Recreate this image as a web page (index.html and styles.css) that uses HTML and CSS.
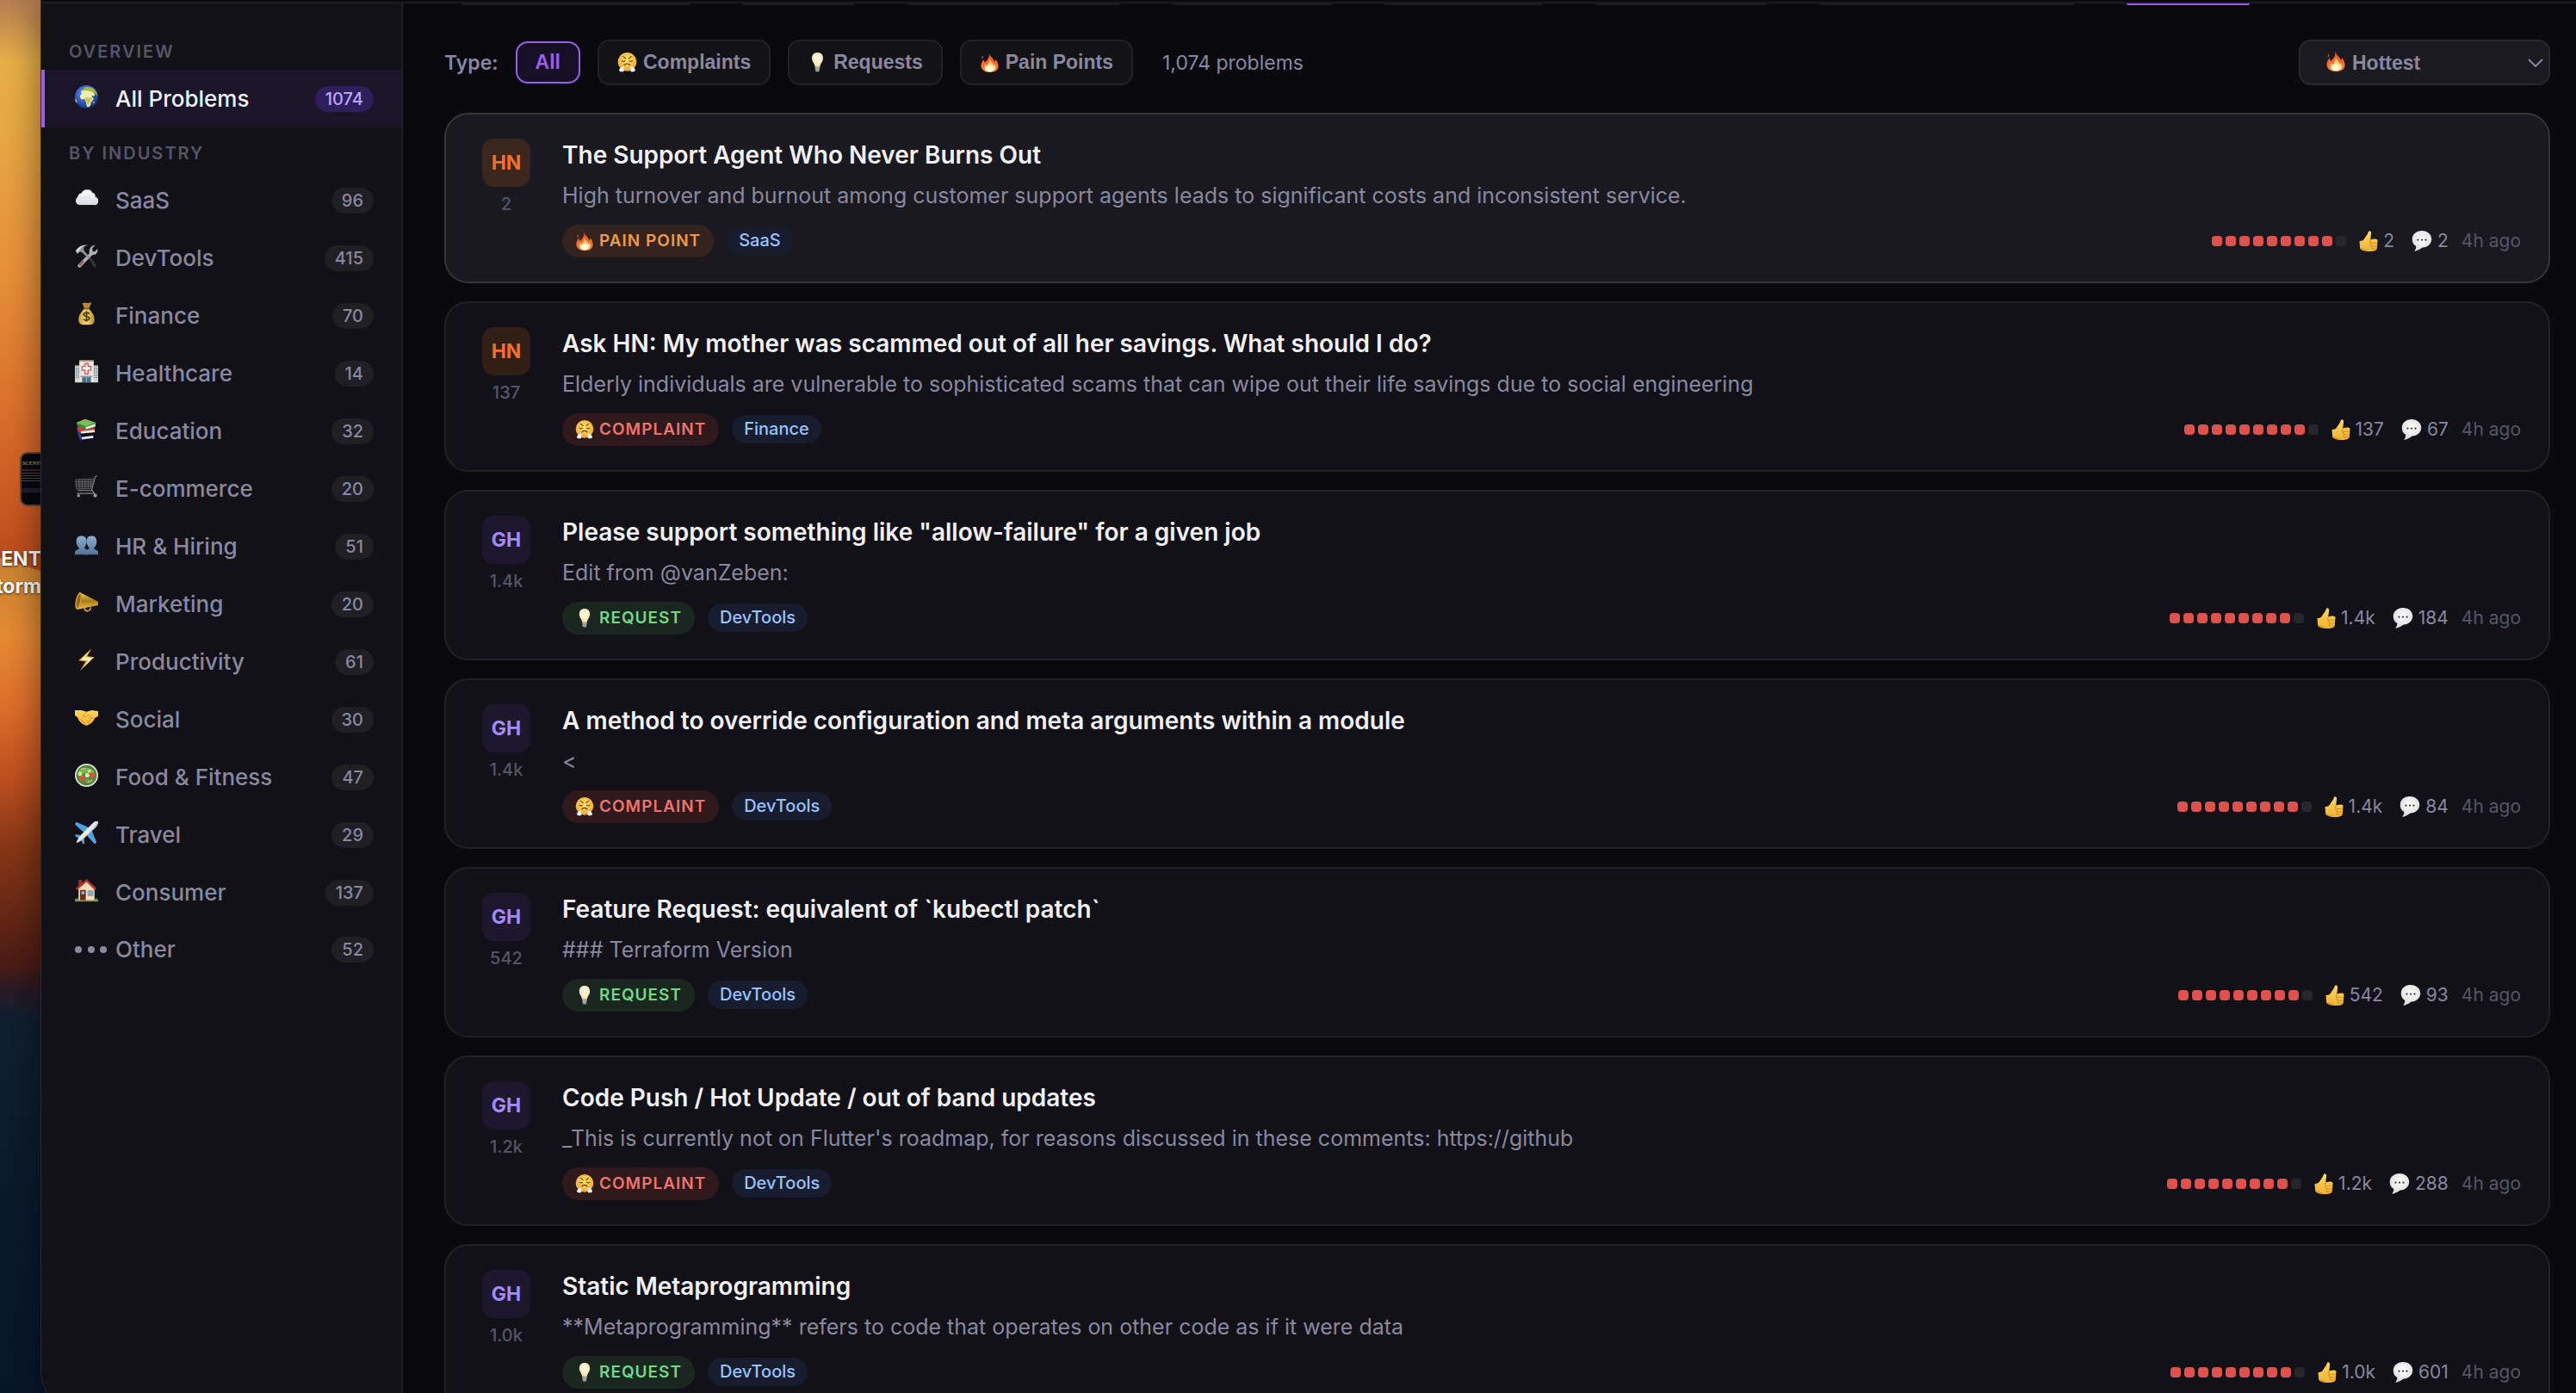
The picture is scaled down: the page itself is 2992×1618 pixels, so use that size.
FILE: index.html
```html
<!DOCTYPE html>
<html lang="en">
<head>
  <meta charset="UTF-8">
  <meta name="viewport" content="width=device-width, initial-scale=1.0">
  <title>All Problems</title>
  <link rel="stylesheet" href="styles.css">
</head>
<body>

  <!-- icon sprite -->
  <svg class="sprite" aria-hidden="true">
    <defs>
      <radialGradient id="gSea" cx="40%" cy="35%" r="70%"><stop offset="0" stop-color="#5f95ee"/><stop offset="0.6" stop-color="#2a56bd"/><stop offset="1" stop-color="#152a66"/></radialGradient>
      <linearGradient id="gCloud" x1="0" y1="0" x2="0" y2="1"><stop offset="0" stop-color="#ffffff"/><stop offset="1" stop-color="#d3d8e0"/></linearGradient>
      <radialGradient id="gFace" cx="50%" cy="40%" r="60%"><stop offset="0" stop-color="#ffe56a"/><stop offset="1" stop-color="#f2a531"/></radialGradient>
      <linearGradient id="gFlame" x1="0" y1="0" x2="0" y2="1"><stop offset="0" stop-color="#e8452c"/><stop offset="1" stop-color="#f98a2e"/></linearGradient>
      <linearGradient id="gCore" x1="0" y1="0" x2="0" y2="1"><stop offset="0" stop-color="#fbb040"/><stop offset="1" stop-color="#fffbd0"/></linearGradient>
      <radialGradient id="gBulb" cx="50%" cy="40%" r="60%"><stop offset="0" stop-color="#fffdf2"/><stop offset="1" stop-color="#f3dfa4"/></radialGradient>
      <linearGradient id="gHand" x1="0" y1="0" x2="0" y2="1"><stop offset="0" stop-color="#ffd75e"/><stop offset="1" stop-color="#f0b136"/></linearGradient>
      <radialGradient id="gTalk" cx="50%" cy="40%" r="60%"><stop offset="0" stop-color="#ffffff"/><stop offset="1" stop-color="#d9d9dc"/></radialGradient>
      <linearGradient id="gPeople" x1="0" y1="0" x2="0" y2="1"><stop offset="0" stop-color="#8fb0d2"/><stop offset="1" stop-color="#4f7196"/></linearGradient>
      <linearGradient id="gBag" x1="0" y1="0" x2="1" y2="0"><stop offset="0" stop-color="#c99a3c"/><stop offset="0.5" stop-color="#f6d878"/><stop offset="1" stop-color="#b98832"/></linearGradient>
      <linearGradient id="gHorn" x1="0" y1="0" x2="0" y2="1"><stop offset="0" stop-color="#f6d860"/><stop offset="0.5" stop-color="#a87a18"/><stop offset="1" stop-color="#e9c14a"/></linearGradient>
    </defs>

    <symbol id="globe" viewBox="0 0 32 32">
      <circle cx="16" cy="16" r="16" fill="url(#gSea)"/>
      <path d="M8 10c2-4 5-5 9-4l3 1 4 1 2 3 2 1-2 3-3-1 1 3 2 1c-1 3-3 4-4 6 0 4-2 6-4 6s-2-4-3-7c0-2-1-3-2-4-3 1-6 0-6-3 0-2 1-4 3-5z" fill="#f1ecab"/>
      <path d="M12 4c5-3 12-2 15 2 3 3 4 6 4 9l-3-4-4-2-5-1-4-1-4 1z" fill="#a5b940"/>
      <path d="M13 17c4 0 8-1 11 1-1 3-3 4-4 6 0 2-1 4-2 4s-2-4-3-7z" fill="#c5c95c"/>
      <path d="M0 18l2 2 1 4-2-1zM25 24l1-2 1 1-1 3z" fill="#d8d26a"/>
    </symbol>
    <symbol id="cloud" viewBox="0 0 32 32">
      <path d="M6 25a6 6 0 0 1-2-11 5 5 0 0 1 5-5 7 7 0 0 1 8-5 7 7 0 0 1 7 4 5 5 0 0 1 4 6 5.600 5.600 0 0 1-2 11z" fill="url(#gCloud)"/>
      <path d="M8 16c3 0 4-2 8-2s5-2 7-3" fill="none" stroke="#dcdfe6" stroke-width="1"/>
    </symbol>
    <symbol id="tools" viewBox="0 0 32 32">
      <path d="M19 19l2-2 9 12-3 3z" fill="#35353a"/>
      <path d="M24 9l3 1 4-4c1 4-1 8-5 8l-3 1L8 31c-2 2-5 0-4-3l16-16c-1-5 2-11 8-11l-4 4z" fill="#aeb2b8"/>
      <path d="M1 9c4-6 9-9 17-8-4 1-6 2-6 5l1 3 8 9-2 2-9-9-3-1-4 3z" fill="#8d9298"/>
      <path d="M1 9c4-6 9-9 17-8-5 0-9 2-11 6l-3 4z" fill="#d2d6da"/>
      <path d="M5 28l6-6 2 2-6 6z" fill="#9c5b4c"/>
    </symbol>
    <symbol id="money" viewBox="0 0 32 32">
      <path d="M10 1c2 1 4-1 6 0s4-1 7 0l-4 8h-6z" fill="#b9862f"/>
      <path d="M13 9h6c4 4 8 9 8 15 0 5-3 7-6 7H11c-3 0-6-2-6-7 0-6 4-11 8-15z" fill="url(#gBag)"/>
      <path d="M12 8h8v2h-8z" fill="#7d5a26"/>
      <path d="M20 16c-1-2-8-2-8 1s8 2 8 5-7 4-8 1M16 12v15" fill="none" stroke="#4b3a16" stroke-width="2"/>
    </symbol>
    <symbol id="hospital" viewBox="0 0 32 32">
      <path d="M0 8h7v23H0zM25 8h7v23h-7z" fill="#d6d2c4"/>
      <path d="M6 1h20v30H6z" fill="#e6e4dc"/>
      <path d="M6 0h20v2H6zM0 7h6v2H0zM26 7h6v2h-6z" fill="#8c8577"/>
      <path d="M2 11v14M5 11v14M27 11v14M30 11v14" stroke="#5f8aa8" stroke-width="1.500" stroke-dasharray="2 1"/>
      <path d="M14 5h4v4h4v5h-4v5h-4v-5h-4V9h4z" fill="#fff" stroke="#e0474c" stroke-width="1.500"/>
      <path d="M8 22h16v2H8z" fill="#8e969c"/><path d="M10 24h12v7H10z" fill="#416f8d"/>
      <path d="M16 24v7" stroke="#a9c4d4"/>
    </symbol>
    <symbol id="books" viewBox="0 0 32 32">
      <path d="M2 13l4 1 3 14 17-3v3L9 31 6 29z" fill="#2d3f9c"/>
      <path d="M9 27l16-2v3l-15 2z" fill="#e8e8ee"/>
      <path d="M4 12l24-1-1 4 1 5-20 2-4-4z" fill="#cf3b34"/>
      <path d="M8 19l19-2v3L9 22z" fill="#f3efea"/>
      <path d="M2 7L14 2l15 5-1 6-13 4L3 11z" fill="#3f8a35"/>
      <path d="M2 7L14 2l15 5-14 5z" fill="#78bb58"/>
      <path d="M15 13l13-4v3l-13 4z" fill="#f1f1ec"/>
    </symbol>
    <symbol id="cart" viewBox="0 0 32 32">
      <path d="M31 1l-3 1-5 19H4" fill="none" stroke="#77777b" stroke-width="1.500"/>
      <path d="M1 6l25-1-3 13-21 1z" fill="#26262a" stroke="#66666a"/>
      <path d="M1 9h24M1 12h24M2 15h22M6 6v13M10 6v13M14 6v13M18 5v13M22 5v13" stroke="#66666a" stroke-width="1"/>
      <path d="M23 20l4 5H3" fill="none" stroke="#85858a" stroke-width="1.500"/>
      <circle cx="5" cy="28" r="2" fill="#9a9a9e"/><circle cx="28" cy="28" r="2.500" fill="#9a9a9e"/>
    </symbol>
    <symbol id="people" viewBox="0 0 32 32">
      <path d="M9 4c5 0 7 3 7 8 0 4-2 6-3 9l5 3v6H0v-4c0-2 5-3 6-5-2-2-4-5-4-9 0-5 2-8 7-8z" fill="url(#gPeople)"/>
      <path d="M23 4c5 0 7 3 7 8 0 4-2 7-4 9 1 2 6 3 6 5v4H15v-5l5-4c-2-3-4-5-4-9 0-5 2-8 7-8z" fill="url(#gPeople)"/>
    </symbol>
    <symbol id="horn" viewBox="0 0 32 32">
      <path d="M6 2L32 15v5L3 26z" fill="url(#gHorn)"/>
      <ellipse cx="5" cy="14" rx="4" ry="12" transform="rotate(12 5 14)" fill="#c9992c"/>
      <ellipse cx="5" cy="14" rx="2" ry="9" transform="rotate(12 5 14)" fill="#8a6414"/>
      <path d="M13 24c1 6 8 5 9-1" fill="none" stroke="#cda23a" stroke-width="2"/>
    </symbol>
    <symbol id="bolt" viewBox="0 0 32 32">
      <path d="M23 0L5 17l10 1L7 31l20-19-10-1z" fill="#f7a531"/>
      <path d="M20 4L8 16l10 1-6 9 12-13-10-1z" fill="#fff3b8"/>
    </symbol>
    <symbol id="shake" viewBox="0 0 32 32">
      <path d="M0 6l9 0 7 2 7-2 9 1v7l-5 3c0 4-8 10-11 10-4 0-12-7-12-11l-4-3z" fill="url(#gHand)"/>
      <path d="M16 8l-5 6c2 2 5 0 7-2l9 7M10 20l4 5M7 17l4 4M20 17l4 5M17 19l4 5" fill="none" stroke="#c88a20" stroke-width="1"/>
    </symbol>
    <symbol id="salad" viewBox="0 0 32 32">
      <circle cx="16" cy="16" r="16" fill="#dfe2dc"/><circle cx="16" cy="16" r="14" fill="#4c8a35"/>
      <path d="M5 11c3-5 8-7 12-5l8 3 3 7-8-3-7 1z" fill="#7fb257"/>
      <circle cx="10" cy="20" r="4" fill="#d2534a"/><circle cx="24" cy="16" r="4" fill="#d2534a"/>
      <circle cx="17" cy="16" r="3" fill="#dcef9a"/><circle cx="7" cy="14" r="3" fill="#d0e88a"/><circle cx="20" cy="10" r="2.500" fill="#c6e47c"/><circle cx="17" cy="23" r="3" fill="#6ba344"/>
      <path d="M8 8c3-2 4 1 7-2M18 26c2-2 5-2 6-4" stroke="#d8b8ae" stroke-width="1.500" fill="none"/>
    </symbol>
    <symbol id="plane" viewBox="0 0 32 32">
      <path d="M20 9L2 1 0 4l13 12zM23 12l7 17-3 2-11-12z" fill="#4ba3e0"/>
      <path d="M8 19l-7-1-1 2 6 4zM13 24l0 7-2 0-3-6z" fill="#4ba3e0"/>
      <path d="M32 0c-4-1-6 1-9 4L9 18C6 21 3 25 2 30c5-2 9-5 12-8l14-13c3-3 4-5 4-9z" fill="#e9eaee"/>
      <path d="M2 30c5-2 9-5 12-8l14-13c3-3 4-5 4-9-5 9-15 18-22 24z" fill="#b9bcc6"/>
    </symbol>
    <symbol id="house" viewBox="0 0 32 32">
      <path d="M5 1h5v12H5z" fill="#8b3129"/>
      <path d="M5 13L16 3l11 10v17H5z" fill="#f1dfbc"/>
      <path d="M16 0L1 13l2 2L16 4l11 11 3-2z" fill="#b9342c"/>
      <path d="M7 15h8v15H7z" fill="#6d2f1e"/><path d="M9 17h4v4H9z" fill="#7ec3f0"/>
      <path d="M18 16h7v7h-7z" fill="#68b1e6" stroke="#b59a74"/>
      <path d="M0 30c0-4 3-4 5-3v3zM27 27c3-1 5 0 5 3h-5z" fill="#5f9a35"/>
      <path d="M0 29h32v2H0z" fill="#8a8c5a"/>
    </symbol>
    <symbol id="dots" viewBox="0 0 38 10">
      <circle cx="4" cy="5" r="4" fill="#8888a0"/><circle cx="19" cy="5" r="4" fill="#8888a0"/><circle cx="33" cy="5" r="4" fill="#8888a0"/>
    </symbol>
    <symbol id="huff" viewBox="0 0 32 32">
      <circle cx="16" cy="15" r="15" fill="url(#gFace)"/>
      <path d="M9 6l5 4M23 6l-5 4" fill="none" stroke="#5f3a12" stroke-width="1.500"/>
      <path d="M7 13c2 2 4 2 6 0M19 13c2 2 4 2 6 0" fill="none" stroke="#5f3a12" stroke-width="1.500"/>
      <path d="M11 21c2-4 8-4 10 0" fill="none" stroke="#5f3a12" stroke-width="1.500"/>
      <path d="M11 22l-1 4c2 3 0 6-3 5-4 0-5-3-3-5 1-2 4-3 7-4zM21 22l1 4c-2 3 0 6 3 5 4 0 5-3 3-5-1-2-4-3-7-4z" fill="#f1f4fa"/>
    </symbol>
    <symbol id="bulb" viewBox="0 0 32 32">
      <path d="M12 22h8l-1 8c-1 2-5 2-6 0z" fill="#8d8d90"/>
      <path d="M12 25h8M12 28h7" stroke="#cfcfd2"/>
      <path d="M16 0c6 0 9 4 9 9 0 6-4 8-5 14h-8C11 17 7 15 7 9c0-5 3-9 9-9z" fill="url(#gBulb)"/>
    </symbol>
    <symbol id="flame" viewBox="0 0 32 32">
      <path d="M15 0c1 7 8 9 9 15l2-4c3 4 4 8 4 11 0 7-6 10-14 10S2 28 2 21c0-4 2-7 4-10l2 5c5-4 8-9 7-16z" fill="url(#gFlame)"/>
      <path d="M5 5c-2 2-2 4-1 5 2-1 2-3 1-5z" fill="#e8452c"/>
      <path d="M16 9c1 6 6 7 6 12l2-2c4 7-1 12-8 12S6 26 9 19l2 3c3-4 5-8 5-13z" fill="url(#gCore)"/>
      <ellipse cx="16" cy="26" rx="5" ry="5" fill="#fffcd8"/>
    </symbol>
    <symbol id="thumb" viewBox="0 0 28 32">
      <path d="M14 1c2-2 5 0 4 4l-1 9c5-2 11-2 11 1l-1 13c-1 3-6 4-10 4-6 0-10 0-13-2l-3-2-1-12c5 0 7-2 9-6 2-3 4-5 5-9z" fill="url(#gHand)"/>
      <path d="M17 15c-3 3 0 4 4 4h6M18 19c-3 3 0 4 3 5h6M19 24c-2 3 0 4 2 4h5M1 27c4 1 5 3 11 4" fill="none" stroke="#cf9420" stroke-width="1.500"/>
    </symbol>
    <symbol id="talk" viewBox="0 0 32 32">
      <path d="M16 0c9 0 15 6 15 13s-6 13-14 13c-4 3-8 5-13 6 2-2 3-5 3-8-4-2-6-6-6-11C1 6 7 0 16 0z" fill="url(#gTalk)"/>
      <circle cx="10" cy="14" r="1.500" fill="#333"/><circle cx="16" cy="14" r="1.500" fill="#333"/><circle cx="22" cy="14" r="1.500" fill="#333"/>
    </symbol>
    <symbol id="chevron" viewBox="0 0 18 10">
      <path d="M1 1l8 8 8-8" fill="none" stroke="#8888a0" stroke-width="2"/>
    </symbol>
  </svg>

  <!-- file sitting on the desktop behind the window -->
  <div class="desktop-file">
    <div class="file-thumb"><b>SCENTI</b></div>
    <div class="file-name">ENT<br>torm</div>
  </div>

  <div class="window">
    <div class="topbar"></div>
    <div class="layout">

      <nav class="sidebar">
        <h2>Overview</h2>
        <ul>
          <li><a href="#" class="active"><svg class="icon"><use href="#globe"/></svg>All Problems<span class="count">1074</span></a></li>
        </ul>
        <h2>By Industry</h2>
        <ul>
          <li><a href="#"><svg class="icon"><use href="#cloud"/></svg>SaaS<span class="count">96</span></a></li>
          <li><a href="#"><svg class="icon"><use href="#tools"/></svg>DevTools<span class="count">415</span></a></li>
          <li><a href="#"><svg class="icon"><use href="#money"/></svg>Finance<span class="count">70</span></a></li>
          <li><a href="#"><svg class="icon"><use href="#hospital"/></svg>Healthcare<span class="count">14</span></a></li>
          <li><a href="#"><svg class="icon"><use href="#books"/></svg>Education<span class="count">32</span></a></li>
          <li><a href="#"><svg class="icon"><use href="#cart"/></svg>E-commerce<span class="count">20</span></a></li>
          <li><a href="#"><svg class="icon"><use href="#people"/></svg>HR &amp; Hiring<span class="count">51</span></a></li>
          <li><a href="#"><svg class="icon"><use href="#horn"/></svg>Marketing<span class="count">20</span></a></li>
          <li><a href="#"><svg class="icon"><use href="#bolt"/></svg>Productivity<span class="count">61</span></a></li>
          <li><a href="#"><svg class="icon"><use href="#shake"/></svg>Social<span class="count">30</span></a></li>
          <li><a href="#"><svg class="icon"><use href="#salad"/></svg>Food &amp; Fitness<span class="count">47</span></a></li>
          <li><a href="#"><svg class="icon"><use href="#plane"/></svg>Travel<span class="count">29</span></a></li>
          <li><a href="#"><svg class="icon"><use href="#house"/></svg>Consumer<span class="count">137</span></a></li>
          <li><a href="#" class="other"><svg class="icon wide"><use href="#dots"/></svg>Other<span class="count">52</span></a></li>
        </ul>
      </nav>

      <main>
        <!-- source chips, scrolled almost out of view -->
        <div class="chips">
          <i style="width: 266px"></i><i style="width: 131px"></i><i style="width: 248px"></i><i style="width: 187px"></i><i style="width: 185px"></i><i style="width: 200px"></i><i style="width: 297px"></i><i class="on" style="width: 143px"></i>
        </div>

        <div class="toolbar">
          <span class="toolbar-label">Type:</span>
          <button class="filter on">All</button>
          <button class="filter"><svg><use href="#huff"/></svg>Complaints</button>
          <button class="filter"><svg><use href="#bulb"/></svg>Requests</button>
          <button class="filter"><svg><use href="#flame"/></svg>Pain Points</button>
          <span class="total">1,074 problems</span>
          <div class="sort">
            <select aria-label="Sort by">
              <option>Hottest</option>
              <option>Newest</option>
            </select>
            <svg class="sort-icon"><use href="#flame"/></svg>
            <svg class="sort-arrow"><use href="#chevron"/></svg>
          </div>
        </div>

        <div class="cards">
          <article class="card hover">
            <div class="source"><span class="logo hn">HN</span><span class="points">2</span></div>
            <div class="body">
              <h3>The Support Agent Who Never Burns Out</h3>
              <p>High turnover and burnout among customer support agents leads to significant costs and inconsistent service.</p>
              <div class="meta">
                <span class="type pain"><svg><use href="#flame"/></svg>Pain Point</span>
                <span class="tag">SaaS</span>
                <span class="heat"><i></i><i></i><i></i><i></i><i></i><i></i><i></i><i></i><i></i><i></i></span>
                <span class="stat"><svg><use href="#thumb"/></svg>2</span>
                <span class="stat talk"><svg><use href="#talk"/></svg>2</span>
                <span class="time">4h ago</span>
              </div>
            </div>
          </article>

          <article class="card">
            <div class="source"><span class="logo hn">HN</span><span class="points">137</span></div>
            <div class="body">
              <h3>Ask HN: My mother was scammed out of all her savings. What should I do?</h3>
              <p>Elderly individuals are vulnerable to sophisticated scams that can wipe out their life savings due to social engineering</p>
              <div class="meta">
                <span class="type complaint"><svg><use href="#huff"/></svg>Complaint</span>
                <span class="tag">Finance</span>
                <span class="heat"><i></i><i></i><i></i><i></i><i></i><i></i><i></i><i></i><i></i><i></i></span>
                <span class="stat"><svg><use href="#thumb"/></svg>137</span>
                <span class="stat talk"><svg><use href="#talk"/></svg>67</span>
                <span class="time">4h ago</span>
              </div>
            </div>
          </article>

          <article class="card">
            <div class="source"><span class="logo gh">GH</span><span class="points">1.4k</span></div>
            <div class="body">
              <h3>Please support something like "allow-failure" for a given job</h3>
              <p>Edit from @vanZeben:</p>
              <div class="meta">
                <span class="type request"><svg><use href="#bulb"/></svg>Request</span>
                <span class="tag">DevTools</span>
                <span class="heat"><i></i><i></i><i></i><i></i><i></i><i></i><i></i><i></i><i></i><i></i></span>
                <span class="stat"><svg><use href="#thumb"/></svg>1.4k</span>
                <span class="stat talk"><svg><use href="#talk"/></svg>184</span>
                <span class="time">4h ago</span>
              </div>
            </div>
          </article>

          <article class="card">
            <div class="source"><span class="logo gh">GH</span><span class="points">1.4k</span></div>
            <div class="body">
              <h3>A method to override configuration and meta arguments within a module</h3>
              <p>&lt;</p>
              <div class="meta">
                <span class="type complaint"><svg><use href="#huff"/></svg>Complaint</span>
                <span class="tag">DevTools</span>
                <span class="heat"><i></i><i></i><i></i><i></i><i></i><i></i><i></i><i></i><i></i><i></i></span>
                <span class="stat"><svg><use href="#thumb"/></svg>1.4k</span>
                <span class="stat talk"><svg><use href="#talk"/></svg>84</span>
                <span class="time">4h ago</span>
              </div>
            </div>
          </article>

          <article class="card">
            <div class="source"><span class="logo gh">GH</span><span class="points">542</span></div>
            <div class="body">
              <h3>Feature Request: equivalent of `kubectl patch`</h3>
              <p>### Terraform Version</p>
              <div class="meta">
                <span class="type request"><svg><use href="#bulb"/></svg>Request</span>
                <span class="tag">DevTools</span>
                <span class="heat"><i></i><i></i><i></i><i></i><i></i><i></i><i></i><i></i><i></i><i></i></span>
                <span class="stat"><svg><use href="#thumb"/></svg>542</span>
                <span class="stat talk"><svg><use href="#talk"/></svg>93</span>
                <span class="time">4h ago</span>
              </div>
            </div>
          </article>

          <article class="card">
            <div class="source"><span class="logo gh">GH</span><span class="points">1.2k</span></div>
            <div class="body">
              <h3>Code Push / Hot Update / out of band updates</h3>
              <p>_This is currently not on Flutter's roadmap, for reasons discussed in these comments: https://github</p>
              <div class="meta">
                <span class="type complaint"><svg><use href="#huff"/></svg>Complaint</span>
                <span class="tag">DevTools</span>
                <span class="heat"><i></i><i></i><i></i><i></i><i></i><i></i><i></i><i></i><i></i><i></i></span>
                <span class="stat"><svg><use href="#thumb"/></svg>1.2k</span>
                <span class="stat talk"><svg><use href="#talk"/></svg>288</span>
                <span class="time">4h ago</span>
              </div>
            </div>
          </article>

          <article class="card">
            <div class="source"><span class="logo gh">GH</span><span class="points">1.0k</span></div>
            <div class="body">
              <h3>Static Metaprogramming</h3>
              <p>**Metaprogramming** refers to code that operates on other code as if it were data</p>
              <div class="meta">
                <span class="type request"><svg><use href="#bulb"/></svg>Request</span>
                <span class="tag">DevTools</span>
                <span class="heat"><i></i><i></i><i></i><i></i><i></i><i></i><i></i><i></i><i></i><i></i></span>
                <span class="stat"><svg><use href="#thumb"/></svg>1.0k</span>
                <span class="stat talk"><svg><use href="#talk"/></svg>601</span>
                <span class="time">4h ago</span>
              </div>
            </div>
          </article>
        </div>
      </main>

    </div>
  </div>

</body>
</html>
```

FILE: styles.css
```css
* {
  box-sizing: border-box;
}

body {
  margin: 0;
  height: 100vh;
  overflow: hidden;
  font-family: Inter, "Liberation Sans", sans-serif;
  color: #8888a0;
  background:
    linear-gradient(198deg, #b9491c 50%, #d08632 54%) 0 645px / 48px 20px no-repeat,
    linear-gradient(to bottom, #b57d55 0, #e8b048 70px, #e9a742 160px, #e8903a 320px, #dd742d 460px, #c95722 600px, #b9491c 664px, #d08632 665px, #e78a34 740px, #df6f2c 820px, #c05220 900px, #8a3817 980px, #682816 1060px, #4c1c15 1120px, #2a1a24 1150px, #101f31 1185px, #0c1b2d 1350px, #08152b 1618px);
}

.sprite {
  position: absolute;
  width: 0;
  height: 0;
}

ul {
  list-style: none;
  margin: 0;
  padding: 0;
}

/* desktop */
.desktop-file {
  position: absolute;
  top: 525px;
  left: 0;
  width: 48px;
}

.file-thumb {
  width: 60px;
  height: 63px;
  margin-left: 23px;
  padding: 8px 0 0 1px;
  border: 2px solid #4d4c48;
  border-radius: 9px;
  font-family: "Liberation Serif", serif;
  font-size: 6px;
  line-height: 6px;
  color: #a8935a;
  background:
    linear-gradient(#3f2530, #3f2530) 0 18px / 100% 2px no-repeat,
    repeating-linear-gradient(to bottom, #4a4a4e 0 1px, transparent 1px 3px) 0 22px / 100% 12px no-repeat,
    linear-gradient(#1f1c30, #1f1c30) 0 40px / 100% 5px no-repeat,
    #08080c;
}

.file-name {
  width: 48px;
  margin-top: 45px;
  font-size: 23px;
  line-height: 32px;
  font-weight: 700;
  color: #fff;
  display: flex;
  justify-content: flex-end;
  text-align: right;
  text-shadow: 0 1px 3px rgba(0, 0, 0, 0.7);
}

/* app window */
.window {
  position: relative;
  margin-left: 48px;
  min-height: calc(100vh + 10px);
  display: flex;
  flex-direction: column;
  background-color: #09090e;
  border-bottom-left-radius: 52px;
  overflow: hidden;
  box-shadow: 0 0 0 1px #2c2c30, 0 0 44px rgba(0, 0, 0, 0.5);
}

.topbar {
  height: 4px;
  border-bottom: 2px solid #1b1b20;
}

.layout {
  flex: 1;
  display: flex;
}

/* sidebar */
.sidebar {
  width: 420px;
  flex-shrink: 0;
  padding-top: 26px;
  background-color: #121117;
  border-right: 2px solid #222226;
}

.sidebar h2 {
  margin: 18px 32px 9px;
  font-size: 20px;
  line-height: 24px;
  font-weight: 600;
  letter-spacing: 2px;
  text-transform: uppercase;
  color: #555568;
}

.sidebar a {
  display: flex;
  align-items: center;
  height: 67px;
  padding: 0 32px 0 35px;
  border-left: 4px solid transparent;
  font-size: 26px;
  font-weight: 500;
  color: #8888a0;
  text-decoration: none;
}

.sidebar a.active {
  color: #f0f0f5;
  background-color: #1b152a;
  border-left-color: #9d5cf0;
}

.sidebar a.other {
  height: 65px;
}

.icon {
  width: 27px;
  height: 27px;
  margin: 0 20px 4px 0;
}

.icon.wide {
  width: 38px;
  height: 10px;
  margin: 0 9px 0 0;
}

.count {
  margin-left: auto;
  padding: 0 12px;
  border-radius: 15px;
  font-size: 20px;
  line-height: 30px;
  background-color: #1f1f24;
}

.active .count {
  color: #b8a6fb;
  background-color: #2f1e5c;
}

/* main */
main {
  flex: 1;
  min-width: 0;
  padding: 0 30px 0 48px;
}

.chips {
  display: flex;
  gap: 60px;
  padding-left: 20px;
}

.chips i {
  height: 2px;
  flex-shrink: 0;
  border-radius: 0 0 4px 4px;
  background-color: #1a1a1f;
}

.chips .on {
  background-color: #9d5cf0;
}

.toolbar {
  display: flex;
  align-items: center;
  gap: 20px;
  margin: 40px 0 32px;
  font-size: 23px;
  font-weight: 600;
}

.toolbar button,
.toolbar select {
  height: 53px;
  border: 2px solid #222227;
  border-radius: 14px;
  font-family: "Liberation Sans", Arial, sans-serif;
  font-size: 23px;
  font-weight: 600;
  color: #8888a0;
  background-color: #121217;
}

.filter {
  display: flex;
  align-items: center;
  gap: 7px;
  padding: 0 21px;
}

.filter svg {
  width: 23px;
  height: 23px;
}

.toolbar .filter.on {
  height: 49px;
  border-color: #9d5cf0;
  color: #9d5cf0;
  background-color: #170f26;
}

.total {
  margin-left: 14px;
  font-weight: 400;
}

.sort {
  position: relative;
  margin-left: auto;
}

.toolbar select {
  appearance: none;
  width: 292px;
  padding: 0 40px 0 60px;
  border-color: #28282d;
  background-color: #1a1a20;
}

.sort svg {
  position: absolute;
  pointer-events: none;
}

.sort-icon {
  left: 31px;
  top: 13px;
  width: 24px;
  height: 24px;
}

.sort-arrow {
  right: 8px;
  top: 22px;
  width: 18px;
  height: 10px;
}

/* cards */
.cards {
  display: flex;
  flex-direction: column;
  gap: 21px;
}

.card {
  display: flex;
  gap: 27px;
  padding: 28px 32px;
  border: 2px solid #222226;
  border-radius: 28px;
  background-color: #121117;
}

.card.hover {
  border-color: #35353a;
  background-color: #1a191f;
}

.source {
  width: 76px;
  flex-shrink: 0;
  display: flex;
  flex-direction: column;
  align-items: center;
  gap: 8px;
}

.logo {
  width: 56px;
  border-radius: 14px;
  text-align: center;
  font-size: 23px;
  line-height: 56px;
  font-weight: 700;
}

.logo.hn {
  color: #f26f2d;
  background-color: rgba(249, 115, 22, 0.15);
}

.logo.gh {
  color: #a58bf8;
  background-color: #1e182f;
}

.points {
  font-size: 20px;
  line-height: 24px;
  font-weight: 500;
  color: #555568;
}

.body {
  flex: 1;
  min-width: 0;
}

.card h3 {
  margin: 0 0 8px;
  font-size: 28px;
  line-height: 38px;
  font-weight: 600;
  color: #f0f0f5;
}

.card p {
  margin: 0 0 13px;
  font-size: 25px;
  line-height: 40px;
}

.meta {
  display: flex;
  align-items: center;
  gap: 15px;
  height: 39px;
  font-size: 21px;
}

.type {
  display: flex;
  align-items: center;
  gap: 6px;
  height: 38px;
  padding: 0 15px;
  border-radius: 19px;
  font-size: 19px;
  font-weight: 600;
  letter-spacing: 1px;
  text-transform: uppercase;
}

.type svg {
  width: 22px;
  height: 22px;
}

.type.pain {
  color: #f0994a;
  background-color: #33241f;
}

.type.complaint {
  color: #ea7470;
  background-color: #2f191d;
}

.type.request {
  color: #6fd983;
  background-color: #1a2720;
}

.tag {
  padding: 0 14px;
  border-radius: 17px;
  font-size: 20px;
  line-height: 33px;
  font-weight: 500;
  color: #98c2fb;
  background-color: #171d2e;
}

.heat {
  display: flex;
  gap: 4px;
  margin-left: auto;
}

.heat i {
  width: 12px;
  height: 12px;
  border-radius: 4px;
  background-color: #dd524c;
}

.heat i:last-child {
  background-color: #26262b;
}

.stat {
  display: flex;
  align-items: center;
  gap: 6px;
}

.stat svg {
  width: 22px;
  height: 24px;
}

.stat.talk {
  margin-left: 5px;
}

.stat.talk svg {
  width: 24px;
}

.time {
  color: #555568;
}
```
